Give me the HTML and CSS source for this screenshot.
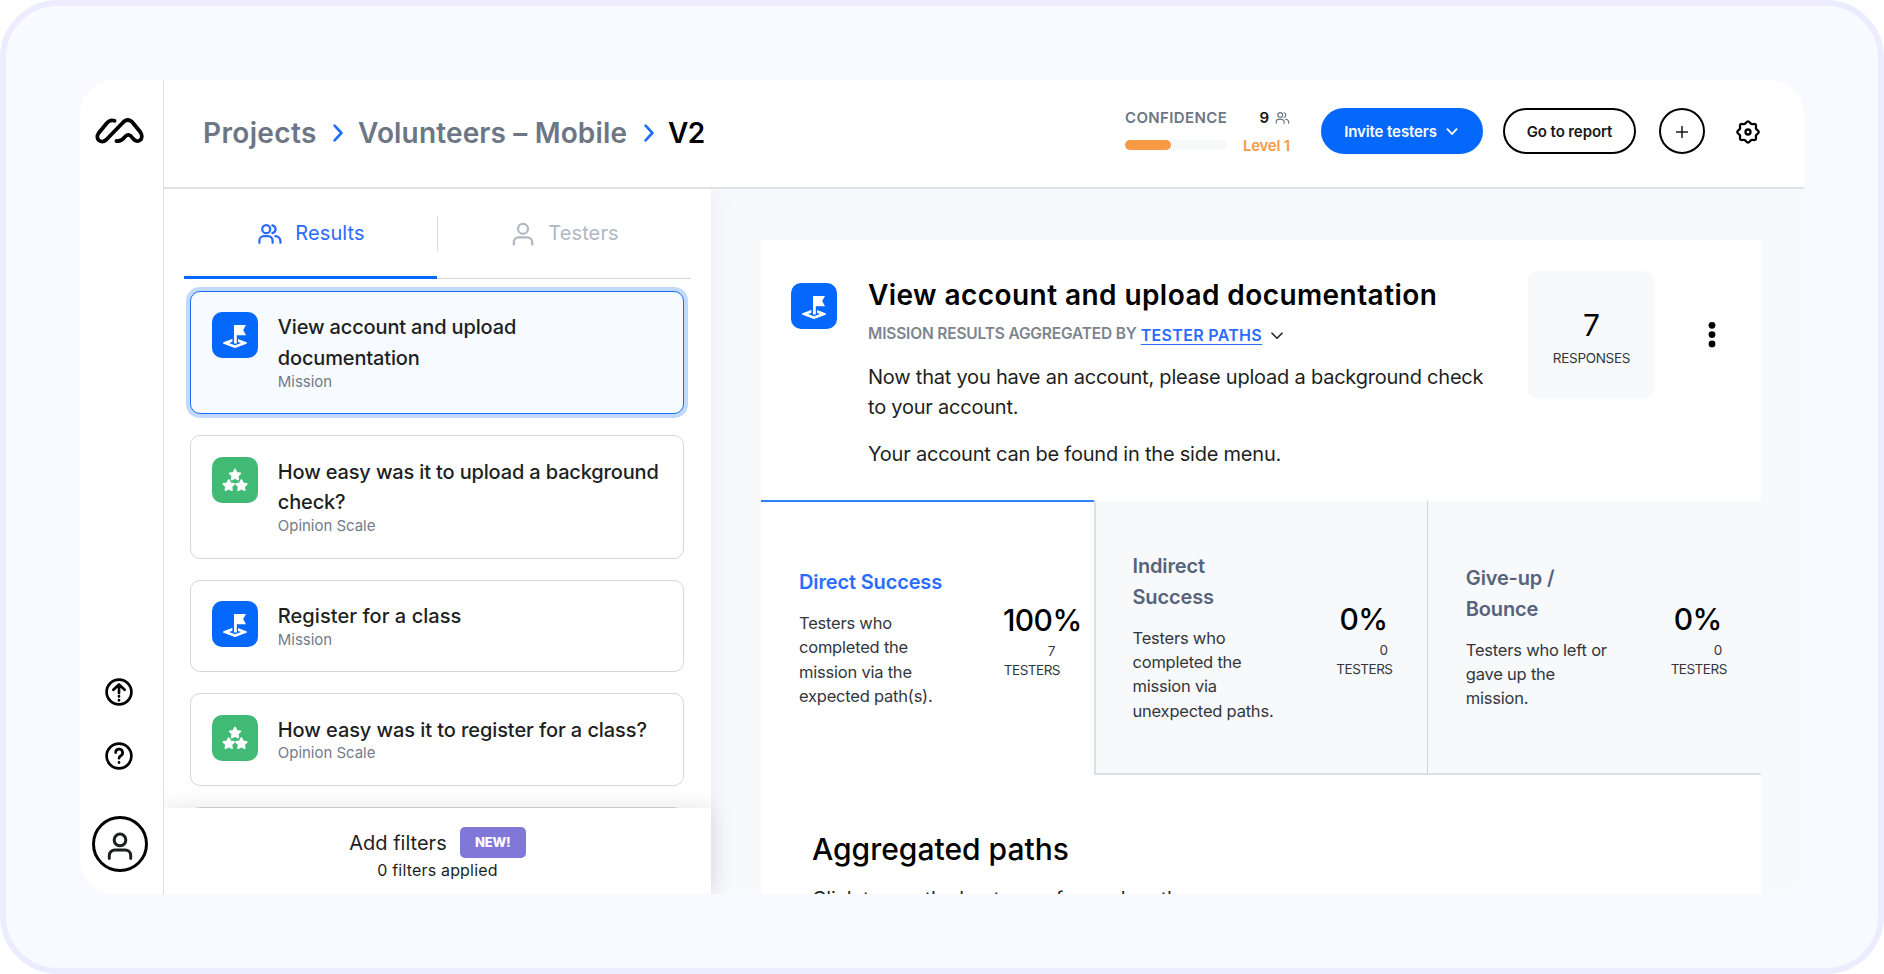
FILE: index.html
```html
<!DOCTYPE html>
<html lang="en">
<head>
<meta charset="utf-8">
<title>Volunteers – Mobile</title>
<link rel="stylesheet" href="styles.css">
</head>
<body>
<svg class="defs" aria-hidden="true">
  <symbol id="mission" viewBox="0 0 46 46">
    <path d="M23 26.8l11.2 4.2L23 35.2 11.8 31z" fill="#fff" stroke="#fff" stroke-width="1.6" stroke-linejoin="round"/>
    <path d="M23 29l6 2.1-6 2.1-6-2.1z" fill="#0568fd"/>
    <path d="M20.4 25h5.6v5.4h-5.6z" fill="#0568fd"/>
    <path d="M22 13h12l-2.8 5 2.8 5.2h-9.2V31.4H22z" fill="#fff"/>
  </symbol>
  <symbol id="stars" viewBox="0 0 46 46">
    <g fill="#fff" stroke="#fff" stroke-width="1.9" stroke-linejoin="round">
      <path id="star" d="M23 12.6l1.6 3.3 3.6.5-2.6 2.5.6 3.6-3.2-1.7-3.2 1.7.6-3.6-2.6-2.5 3.6-.5z"/>
      <use href="#star" x="-6.3" y="10.6"/>
      <use href="#star" x="6.4" y="10.6"/>
    </g>
  </symbol>
  <symbol id="people" viewBox="0 0 24 20">
    <g fill="none" stroke="currentColor" stroke-linecap="round">
      <circle cx="8.2" cy="5.2" r="4"/>
      <path d="M1.4 18.8v-2.2a4.4 4.4 0 0 1 4.4-4.4h4.4a4.4 4.4 0 0 1 4.4 4.4v2.2M14.4 1.3a4 4 0 0 1 0 7.8M17.4 12.2a4.8 4.8 0 0 1 5 4.8v1.8"/>
    </g>
  </symbol>
  <symbol id="person" viewBox="0 0 22 24">
    <g fill="none" stroke="currentColor" stroke-linecap="round">
      <circle cx="11" cy="6.8" r="5"/>
      <path d="M1.8 22.6v-2.4a4.8 4.8 0 0 1 4.8-4.8h8.8a4.8 4.8 0 0 1 4.8 4.8v2.4"/>
    </g>
  </symbol>
</svg>

<div class="app">
  <nav class="rail">
    <svg class="logo" viewBox="0 0 64 44"><path d="M26.5 12.8C23 11.5 20.5 13 18.5 15.5L10.7 25C6.5 31 13 36.5 18.5 31.5L34.5 15C38 11 41.5 11 45 15l7.3 9C57 31 49.5 36.5 45 30.5c-3.2-4.6-5.8-4.6-8.4-1.4-2.4 3.3-4.6 4.4-8.1 3.9"/></svg>
    <svg class="rail-icon push" viewBox="0 0 28 28"><circle cx="14" cy="14" r="12.4"/><path d="M8.4 11.8L14 6.6l5.6 5.2M14 7v8M14 18.2v.3M14 22v.3"/></svg>
    <svg class="rail-icon help" viewBox="0 0 28 28"><circle cx="14" cy="14" r="12.4"/><path d="M10.6 10.6a3.5 3.5 0 1 1 5.2 3.1c-1.2.7-1.8 1.3-1.8 2.5M14 20.3v.3"/></svg>
    <div class="avatar"><svg viewBox="0 0 22 24"><use href="#person"/></svg></div>
  </nav>

  <div class="workspace">
    <header class="topbar">
      <div class="crumbs">
        <span class="crumb-projects">Projects</span>
        <svg class="crumb-sep" viewBox="0 0 10 18"><path d="M1.6 1.6L8.4 9l-6.8 7.4"/></svg>
        <span class="crumb-name">Volunteers – Mobile</span>
        <svg class="crumb-sep second" viewBox="0 0 10 18"><path d="M1.6 1.6L8.4 9l-6.8 7.4"/></svg>
        <span class="current">V2</span>
      </div>
      <div class="confidence">
        <div class="conf-left"><span class="conf-label">CONFIDENCE</span><div class="meter"><div class="meter-fill"></div></div></div>
        <div class="conf-right">
          <span class="conf-count">9 <svg viewBox="0 0 24 20"><use href="#people"/></svg></span>
          <span class="level">Level 1</span>
        </div>
      </div>
      <button class="btn invite">Invite testers <svg viewBox="0 0 12 8"><path d="M1.4 1.2L6 6l4.6-4.8"/></svg></button>
      <button class="btn report">Go to report</button>
      <button class="btn plus"><svg viewBox="0 0 12 12"><path d="M6 .6v10.8M.6 6h10.8"/></svg></button>
      <svg class="gear" viewBox="-12 -12 24 24"><path d="M9.42 -1.87Q12 0 9.42 1.87Q7.39 3.06 7.98 5.33Q8.49 8.49 5.33 7.98Q3.06 7.39 1.87 9.42Q0 12 -1.87 9.42Q-3.06 7.39 -5.33 7.98Q-8.49 8.49 -7.98 5.33Q-7.39 3.06 -9.42 1.87Q-12 0 -9.42 -1.87Q-7.39 -3.06 -7.98 -5.33Q-8.49 -8.49 -5.33 -7.98Q-3.06 -7.39 -1.87 -9.42Q0 -12 1.87 -9.42Q3.06 -7.39 5.33 -7.98Q8.49 -8.49 7.98 -5.33Q7.39 -3.06 9.42 -1.87Z"/><circle r="2.5"/></svg>
    </header>

    <div class="columns">
      <aside class="panel">
        <div class="tabs">
          <div class="tab active"><svg class="ic-people" viewBox="0 0 24 20"><use href="#people"/></svg><span>Results</span></div>
          <div class="tab-divider"></div>
          <div class="tab"><svg class="ic-person" viewBox="0 0 22 24"><use href="#person"/></svg><span>Testers</span></div>
        </div>
        <div class="cards">
          <article class="card selected"><svg class="tile blue"><use href="#mission"/></svg><div><h3>View account and upload<br>documentation</h3><p>Mission</p></div></article>
          <article class="card"><svg class="tile green"><use href="#stars"/></svg><div><h3>How easy was it to upload a background<br>check?</h3><p>Opinion Scale</p></div></article>
          <article class="card"><svg class="tile blue"><use href="#mission"/></svg><div><h3 class="plain">Register for a class</h3><p>Mission</p></div></article>
          <article class="card"><svg class="tile green"><use href="#stars"/></svg><div><h3 class="long">How easy was it to register for a class?</h3><p>Opinion Scale</p></div></article>
          <article class="card next"></article>
        </div>
        <footer class="filters">
          <div class="filters-row"><span>Add filters</span><span class="badge">NEW!</span></div>
          <div class="filters-count">0 filters applied</div>
        </footer>
      </aside>

      <main class="main">
        <section class="sheet">
          <div class="summary">
            <svg class="tile blue"><use href="#mission"/></svg>
            <div class="summary-text">
              <h1>View account and upload documentation</h1>
              <div class="aggregate"><span>MISSION RESULTS AGGREGATED BY</span><a>TESTER PATHS</a><svg viewBox="0 0 12 8"><path d="M1 1.2l5 5 5-5"/></svg></div>
              <p>Now that you have an account, please upload a background check<br>to your account.</p>
              <p>Your account can be found in the side menu.</p>
            </div>
            <div class="responses"><strong>7</strong><span>RESPONSES</span></div>
            <svg class="kebab" viewBox="0 0 8 28"><circle cx="4" cy="4.3" r="3.4"/><circle cx="4" cy="13.6" r="3.4"/><circle cx="4" cy="22.9" r="3.4"/></svg>
          </div>
          <div class="outcomes">
            <div class="outcome on"><div class="outcome-text"><h2>Direct Success</h2><p>Testers who completed the mission via the expected path(s).</p></div><div class="stat"><b>100%</b><i>7</i><em>TESTERS</em></div></div>
            <div class="outcome"><div class="outcome-text"><h2>Indirect Success</h2><p>Testers who completed the mission via unexpected paths.</p></div><div class="stat"><b>0%</b><i>0</i><em>TESTERS</em></div></div>
            <div class="outcome"><div class="outcome-text"><h2>Give-up / Bounce</h2><p>Testers who left or gave up the mission.</p></div><div class="stat"><b>0%</b><i>0</i><em>TESTERS</em></div></div>
          </div>
          <div class="paths"><h2>Aggregated paths</h2><p>Click to see the heatmaps for each path</p></div>
        </section>
      </main>
    </div>
  </div>
</div>
</body>
</html>
```
FILE: styles.css
```css
* { box-sizing: border-box; margin: 0; padding: 0; }
html { background: #fff; }
body {
  width: 1884px; height: 974px; padding: 74px;
  border: 6px solid #ebedff; border-radius: 58px;
  background: #f9faff; overflow: hidden;
  font-family: Inter, "Liberation Sans", sans-serif; color: #1d1f22;
}
.defs { position: absolute; width: 0; height: 0; }
.app { display: flex; width: 1724px; height: 814px; border-radius: 34px; overflow: hidden; background: #fff; }

/* Left rail */
.rail { width: 84px; border-right: 1px solid #dcdee4; display: flex; flex-direction: column; align-items: flex-start; padding: 28px 0 22px 8px; flex: none; }
.logo { width: 64px; height: 44px; fill: none; stroke: #000; stroke-width: 3.8; stroke-linecap: round; }
.rail-icon { width: 28px; height: 28px; margin-left: 17px; fill: none; stroke: #000; stroke-width: 2.7; stroke-linecap: round; stroke-linejoin: round; }
.push { margin-top: auto; }
.help { margin-top: 36px; }
.avatar { width: 56px; height: 56px; margin: 46px 0 0 4px; border: 3px solid #000; border-radius: 50%; display: flex; align-items: center; justify-content: center; }
.avatar svg { width: 26px; height: 28px; stroke-width: 2.6; margin: 3px 1px 0 0; }

.workspace { flex: 1; display: flex; flex-direction: column; min-width: 0; }

/* Top bar */
.topbar { height: 109px; flex: none; border-bottom: 2px solid #dfe1e8; display: flex; align-items: flex-start; padding: 28px 44px 0 39px; }
.crumbs { display: flex; align-items: center; height: 48px; margin: 1px auto 0 0; font-size: 28px; line-height: 48px; font-weight: 600; color: #6c7684; white-space: nowrap; }
.crumb-projects { width: 130px; letter-spacing: .35px; }
.crumb-name { width: 286px; letter-spacing: .15px; }
.crumb-sep { width: 10px; height: 18px; margin-right: 15px; fill: none; stroke: #1f6fff; stroke-width: 2.6; stroke-linecap: round; stroke-linejoin: round; }
.crumb-sep.second { margin-right: 14px; }
.current { color: #000; letter-spacing: -.5px; }
.confidence { display: flex; font-size: 15px; font-weight: 600; line-height: 20px; margin: 0 31px 0 0; }
.conf-left { width: 118px; }
.conf-label { display: block; color: #6c7684; letter-spacing: .38px; }
.meter { width: 102px; height: 10px; margin-top: 12px; border-radius: 5px; background: #f7f8fa; }
.meter-fill { width: 46px; height: 10px; border-radius: 5px; background: #f69a46; }
.conf-right { width: 47px; }
.conf-count { display: flex; justify-content: flex-end; align-items: center; gap: 6px; color: #111; }
.conf-count svg { width: 15px; height: 12px; color: #6c7684; stroke-width: 2; }
.level { display: block; margin-top: 8px; color: #f69a46; letter-spacing: -.25px; white-space: nowrap; }
.btn { height: 46px; border-radius: 23px; border: 2.4px solid #000; background: #fff; color: #16181a; font: 600 15px/40px Inter, sans-serif; letter-spacing: -.1px; display: flex; align-items: center; justify-content: center; white-space: nowrap; }
.btn svg { fill: none; stroke: currentColor; stroke-linecap: round; stroke-linejoin: round; }
.invite { width: 162px; background: #0568fd; border-color: #0568fd; color: #fff; margin-right: 20px; gap: 9px; padding-top: 1px; }
.invite svg { width: 12px; height: 8px; stroke-width: 1.8; margin-right: 2px; }
.report { width: 133px; margin-right: 23px; padding-top: 1px; }
.plus { width: 46px; margin-right: 31px; padding-top: 1px; }
.plus svg { width: 12px; height: 12px; stroke-width: 1.5; }
.gear { width: 24px; height: 24px; margin-top: 12px; fill: none; stroke: #000; stroke-width: 2.3; stroke-linejoin: round; }

.columns { flex: 1; display: flex; min-height: 0; }

/* Results list */
.panel { width: 547px; flex: none; display: flex; flex-direction: column; background: #fff; box-shadow: 0 0 24px rgba(40, 50, 70, .07); z-index: 1; clip-path: inset(0 -40px 0 0); }
.tabs { height: 90px; flex: none; margin: 0 20px; display: flex; align-items: flex-start; border-bottom: 1px solid #d4d6df; }
.tab { height: 90px; flex: 1; display: flex; align-items: center; justify-content: center; padding: 0 0 3px 2px; font-size: 20px; letter-spacing: .1px; color: #b1b8c5; }
.tab svg { flex: none; }
.tab.active { color: #2a6cff; border-bottom: 3px solid #0568fd; padding: 0 0 0 2px; }
.ic-people { width: 24px; height: 20px; margin: 2px 13px 0 0; stroke-width: 2.3; }
.ic-person { width: 22px; height: 24px; margin: 2px 14px 0 0; stroke-width: 2.2; }
.tab-divider { width: 1px; height: 36px; margin-top: 26.5px; background: #dcdee4; }
.cards { flex: 1; min-height: 0; overflow: hidden; padding: 12px 27px 0 26px; display: flex; flex-direction: column; gap: 20.8px; }
.card { flex: none; display: flex; gap: 20px; border: 1.2px solid #d4d6df; border-radius: 10px; padding: 20.4px 10px 23.9px 20.8px; }
.card h3 { font-size: 20px; line-height: 30.6px; font-weight: 500; letter-spacing: -.15px; white-space: nowrap; }
.card h3.plain { letter-spacing: .06px; }
.card h3.long { letter-spacing: -.08px; }
.card p { font-size: 15px; line-height: 16px; color: #737b89; letter-spacing: -.03px; }
.card.selected { background: #f7faff; border-color: #1a6dfc; box-shadow: 0 0 0 4px #c0d9fd; }
.card.next { height: 90px; }
.tile { width: 46px; height: 46px; border-radius: 10px; flex: none; }
.blue { background: #0568fd; }
.green { background: #41ba76; }
.filters { height: 86px; flex: none; padding-top: 19px; background: #fff; box-shadow: 0 0 22px rgba(0, 0, 0, .11); text-align: center; position: relative; }
.filters-row { display: flex; justify-content: center; align-items: center; gap: 13px; height: 31px; font-size: 20px; }
.badge { width: 66px; height: 31px; border-radius: 5px; background: #8078d8; color: #fff; font-size: 13px; font-weight: 800; line-height: 31px; letter-spacing: -.2px; }
.filters-count { font-size: 16px; line-height: 24px; letter-spacing: .18px; }

/* Mission detail */
.main { flex: 1; background: #f8f9fb; padding: 51px 43px 0 50px; overflow: hidden; }
.sheet { background: #fff; height: 700px; }
.summary { display: flex; height: 260px; padding-left: 30px; }
.summary .tile { margin-top: 43px; }
.summary-text { width: 691px; flex: none; padding: 37px 0 0 31px; white-space: nowrap; }
.summary-text h1 { font-size: 28px; line-height: 36px; font-weight: 600; letter-spacing: .43px; color: #000; }
.aggregate { display: flex; align-items: center; font-size: 15.5px; line-height: 26px; margin: 8px 0 14px; font-weight: 600; color: #7c8490; }
.aggregate span { letter-spacing: -.17px; }
.aggregate a { margin: 1px 0 -1px 4px; color: #2a6cff; font-size: 16px; letter-spacing: .32px; text-decoration: underline; text-underline-offset: 2.5px; text-decoration-thickness: 1.4px; }
.aggregate svg { width: 12px; height: 8px; margin: 4px 0 0 9px; fill: none; stroke: #222; stroke-width: 1.6; stroke-linecap: round; }
.summary-text p { font-size: 20px; line-height: 30.6px; letter-spacing: -.22px; margin-bottom: 15.4px; padding-top: .5px; }
.responses { width: 127px; height: 127px; margin: 30.5px 0 0 0; border-radius: 10px; background: #f8f9fb; display: flex; flex-direction: column; align-items: center; padding-top: 36px; }
.responses strong { font-size: 30px; line-height: 37px; font-weight: 400; color: #000; }
.responses span { font-size: 13.5px; line-height: 20px; letter-spacing: -.3px; margin-top: 4px; color: #33373d; }
.kebab { width: 8px; height: 28px; margin: 81px 0 0 53px; fill: #000; }

.outcomes { display: grid; grid-template-columns: 332.5px 333.3px 334.2px; height: 275px; }
.outcome { display: flex; align-items: center; padding: 0 0 0 38px; background: #f8f9fb; border-left: 1px solid #d2d5da; border-bottom: 2px solid #dcdfe4; border-top: 1px solid #fff; }
.outcome:nth-child(2) { border-left: 2px solid #dcdfe4; padding-left: 37px; }
.outcome.on { background: #fff; border-left: 0; border-bottom-color: #fff; border-top: 2px solid #2f80fb; }
.outcome-text { width: 166px; margin-right: 38px; padding-right: 20px; flex: none; }
.outcome:nth-child(2) .outcome-text { margin-right: 37px; }
.outcome h2 { font-size: 20px; line-height: 30.6px; font-weight: 600; letter-spacing: -.15px; color: #56637b; }
.outcome.on h2 { color: #2a6cff; white-space: nowrap; }
.outcome p { font-size: 16.5px; line-height: 24.2px; letter-spacing: -.22px; margin-top: 13.5px; color: #33373d; }
.stat { width: 57px; margin-top: 7px; text-align: right; }
.stat b { display: block; font-size: 30px; line-height: 36px; font-weight: 500; letter-spacing: -.6px; color: #000; padding-right: 5px; }
.stat i, .stat em { display: block; font-style: normal; font-size: 13.5px; line-height: 19.3px; letter-spacing: -.5px; color: #33373d; }
.stat i { margin-top: 3.6px; padding-right: 5px; }
.paths { padding: 56px 0 0 51px; }
.paths h2 { font-size: 30px; line-height: 36px; font-weight: 500; color: #000; }
.paths p { font-size: 20px; line-height: 30px; letter-spacing: -.24px; margin-top: 17px; }
```
